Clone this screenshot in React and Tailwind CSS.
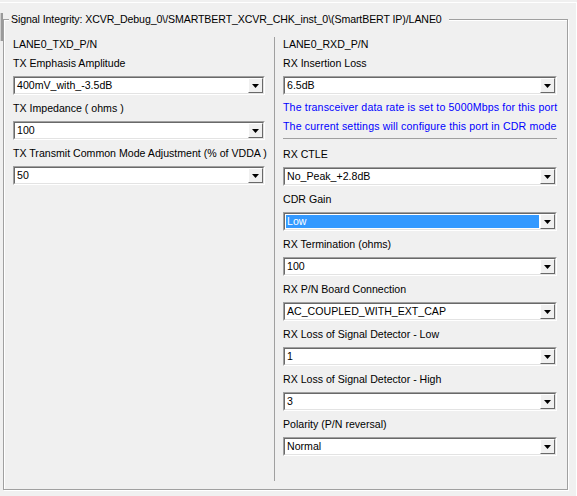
import React from 'react';

function Arrow() {
  return (
    <svg width="7" height="4" viewBox="0 0 7 4">
      <path d="M0 0h7L3.5 4z" fill="#000" />
    </svg>
  );
}

function Combo({ value, selected }) {
  return (
    <div className="h-[19px] border border-t-[#a0a0a0] border-l-[#a0a0a0] border-r-white border-b-white">
      <div className="h-full flex border border-t-[#696969] border-l-[#696969] border-r-[#e3e3e3] border-b-[#e3e3e3] bg-white">
        {selected ? (
          <div className="flex-1 flex p-[1px]">
            <div className="flex-1 bg-[#3399ff] text-white pl-[1px] leading-[13px]">{value}</div>
          </div>
        ) : (
          <div className="flex-1 pl-[2px] leading-[15px] text-black">{value}</div>
        )}
        <div className="w-[15px] flex items-center justify-center bg-[#f0f0f0] border border-t-white border-l-white border-r-[#696969] border-b-[#696969]">
          <Arrow />
        </div>
      </div>
    </div>
  );
}

function Field({ label, value, selected }) {
  return (
    <div className="flex flex-col">
      <div className="h-[14px] leading-[14px] whitespace-nowrap">{label}</div>
      <div className="mt-[6px] mb-[6px]">
        <Combo value={value} selected={selected} />
      </div>
    </div>
  );
}

export default function App() {
  return (
    <div className="relative w-[577px] h-[496px] bg-[#f0f0f0] pt-[2px] text-[10.6px] text-black font-['Liberation_Sans',Arial,sans-serif] overflow-hidden">
      {/* splitter handle peeking in at the left edge */}
      <div className="absolute left-0 top-[13px] w-[3px] h-[28px] bg-[#9a9a9a] border-l border-[#cfcfcf]" />

      <div className="h-full border-t border-r border-white">
        <div className="relative ml-[3px] mt-[16px] w-[565px] h-[471px] border border-[#a0a0a0] shadow-[1px_1px_0_#fff,inset_1px_1px_0_#fff]">
          <span className="absolute left-[5px] -top-[8px] pl-[2px] pr-[7px] bg-[#f0f0f0] leading-[14px] whitespace-nowrap tracking-[-0.1px]">
            Signal Integrity: XCVR_Debug_0\/SMARTBERT_XCVR_CHK_inst_0\(SmartBERT IP)/LANE0
          </span>

          <div className="flex h-full pl-[9px] pr-[10px] pt-[17px] pb-[8px]">
            {/* TX side */}
            <div className="w-[252px] flex flex-col">
              <div className="h-[14px] leading-[14px] mb-[5px]">LANE0_TXD_P/N</div>
              <Field label="TX Emphasis Amplitude" value="400mV_with_-3.5dB" />
              <Field label="TX Impedance ( ohms )" value="100" />
              <Field label="TX Transmit Common Mode Adjustment (% of VDDA )" value="50" />
            </div>

            {/* RX side */}
            <div className="ml-[9px] border-l border-[#a0a0a0] pl-[8px] w-[283px] flex flex-col">
              <div className="h-[14px] leading-[14px] mb-[5px]">LANE0_RXD_P/N</div>
              <Field label="RX Insertion Loss" value="6.5dB" />
              <div className="text-[#0000ff] h-[14px] leading-[14px] mt-[-1px] whitespace-nowrap tracking-[0.15px]">
                The transceiver data rate is set to 5000Mbps for this port
              </div>
              <div className="text-[#0000ff] h-[14px] leading-[14px] mt-[5px] whitespace-nowrap tracking-[0.15px]">
                The current settings will configure this port in CDR mode
              </div>
              <div className="mt-[5px] mb-[8px] border-t border-[#a0a0a0]" />
              <Field label="RX CTLE" value="No_Peak_+2.8dB" />
              <Field label="CDR Gain" value="Low" selected />
              <Field label="RX Termination (ohms)" value="100" />
              <Field label="RX P/N Board Connection" value="AC_COUPLED_WITH_EXT_CAP" />
              <Field label="RX Loss of Signal Detector - Low" value="1" />
              <Field label="RX Loss of Signal Detector - High" value="3" />
              <Field label="Polarity (P/N reversal)" value="Normal" />
            </div>
          </div>
        </div>
      </div>
    </div>
  );
}
